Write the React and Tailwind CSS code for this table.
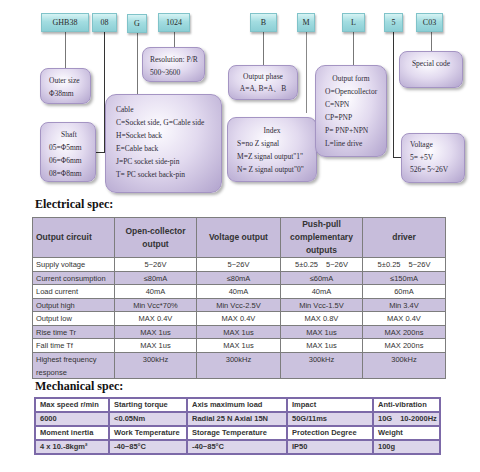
import React from "react";

const teal = [
  ["GHB38", "left-[41px] top-[13px] w-[48px] h-[19px]"],
  ["08", "left-[92px] top-[13px] w-[25px] h-[19px]"],
  ["G", "left-[127px] top-[14px] w-[20px] h-[19px]"],
  ["1024", "left-[158px] top-[13px] w-[32px] h-[19px]"],
  ["B", "left-[250px] top-[13px] w-[27px] h-[19px]"],
  ["M", "left-[297px] top-[13px] w-[18px] h-[19px]"],
  ["L", "left-[342px] top-[13px] w-[23px] h-[19px]"],
  ["5", "left-[384px] top-[13px] w-[19px] h-[19px]"],
  ["C03", "left-[416px] top-[13px] w-[27px] h-[19px]"],
];

const lines = [
  "left-[65px] top-[32px] w-px h-[36px] bg-[#777]",
  "left-[104px] top-[32px] w-px h-[121px] bg-[#333]",
  "left-[96px] top-[152px] w-[9px] h-px bg-[#333]",
  "left-[137px] top-[33px] w-px h-[61px] bg-[#777]",
  "left-[174px] top-[32px] w-px h-[15px] bg-[#777]",
  "left-[263px] top-[32px] w-px h-[33px] bg-[#777]",
  "left-[306px] top-[32px] w-px h-[81px] bg-[#888]",
  "left-[353px] top-[32px] w-px h-[33px] bg-[#777]",
  "left-[393px] top-[32px] w-px h-[126px] bg-[#333]",
  "left-[393px] top-[157px] w-[8px] h-px bg-[#333]",
  "left-[431px] top-[32px] w-px h-[19px] bg-[#777]",
];

function PBox({ cls, children }) {
  return (
    <div
      className={`absolute rounded-[8px] border border-[#a494c3] bg-[radial-gradient(ellipse_at_45%_35%,#fdfcff_0%,#e2daef_45%,#b1a3cd_100%)] shadow-[2px_2px_3px_rgba(0,0,0,0.3)] text-[7.5px] text-[#2e2a36] ${cls}`}
    >
      {children}
    </div>
  );
}

const elecHead = [
  ["Output circuit", "justify-start pl-[3px]"],
  ["Open-collector\noutput", "justify-center text-center"],
  ["Voltage output", "justify-center text-center"],
  ["Push-pull\ncomplementary\noutputs", "justify-center text-center"],
  ["driver", "justify-center text-center"],
];

const elecRows = [
  ["Supply voltage", "5~26V", "5~26V", "5±0.25　5~26V", "5±0.25　5~26V"],
  ["Current consumption", "≤80mA", "≤80mA", "≤60mA", "≤150mA"],
  ["Load current", "40mA", "40mA", "40mA", "60mA"],
  ["Output high", "Min Vcc*70%", "Min Vcc-2.5V", "Min Vcc-1.5V", "Min 3.4V"],
  ["Output low", "MAX 0.4V", "MAX 0.4V", "MAX 0.8V", "MAX 0.4V"],
  ["Rise time Tr", "MAX 1us", "MAX 1us", "MAX 1us", "MAX 200ns"],
  ["Fall time Tf", "MAX 1us", "MAX 1us", "MAX 1us", "MAX 200ns"],
  ["Highest frequency\nresponse", "300kHz", "300kHz", "300kHz", "300kHz"],
];

const mechRows = [
  ["Max speed r/min", "Starting torque", "Axis maximum load", "Impact", "Anti-vibration"],
  ["6000", "<0.05Nm", "Radial 25 N Axial 15N", "50G/11ms", "10G　10-2000Hz"],
  ["Moment inertia", "Work Temperature", "Storage Temperature", "Protection Degree", "Weight"],
  ["4 x 10.-8kgm²", "-40~85°C", "-40~85°C", "IP50", "100g"],
];

export default function App() {
  return (
    <div className="w-[480px] h-[472px] bg-white overflow-hidden font-['Liberation_Sans',Arial,sans-serif]">
      {/* Ordering code diagram */}
      <div className="relative h-[196px] font-['Liberation_Serif','Times_New_Roman',serif]">
        {lines.map((c, i) => (
          <div key={i} className={`absolute ${c}`} />
        ))}
        {teal.map(([t, c]) => (
          <div
            key={t}
            className={`absolute flex items-center justify-center border border-[#80c3c9] bg-[linear-gradient(#d6f3f4,#a3dde1_45%,#8ccfd5)] shadow-[1px_2px_2px_rgba(0,0,0,0.3)] text-[8px] text-[#2a2a2a] ${c}`}
          >
            {t}
          </div>
        ))}

        <PBox cls="left-[142px] top-[47px] w-[63px] h-[35px] pt-[5px] pl-[7px] leading-[13px]">
          <div>Resolution: P/R</div>
          <div>500~3600</div>
        </PBox>

        <PBox cls="left-[40px] top-[68px] w-[51px] h-[36px] pt-[5px] pl-[8px] leading-[13px]">
          <div>Outer size</div>
          <div>Φ38mm</div>
        </PBox>

        <PBox cls="left-[105px] top-[94px] w-[117px] h-[99px] rounded-[11px] pt-[8px] pl-[10px] leading-[13px]">
          <div>Cable</div>
          <div>C=Socket side, G=Cable side</div>
          <div>H=Socket back</div>
          <div>E=Cable back</div>
          <div>J=PC socket side-pin</div>
          <div>T= PC socket back-pin</div>
        </PBox>

        <PBox cls="left-[40px] top-[122px] w-[56px] h-[60px] pt-[5px] pl-[8px] leading-[13px]">
          <div className="pl-[12px]">Shaft</div>
          <div>05=Φ5mm</div>
          <div>06=Φ6mm</div>
          <div>08=Φ8mm</div>
        </PBox>

        <PBox cls="left-[228px] top-[65px] w-[70px] h-[35px] pt-[5px] text-center leading-[12px]">
          <div>Output phase</div>
          <div>A=A, B=A、B</div>
        </PBox>

        <PBox cls="left-[227px] top-[117px] w-[90px] h-[65px] rounded-[9px] pt-[6px] pl-[9px] leading-[13px]">
          <div className="text-center pr-[9px]">Index</div>
          <div>S=no Z signal</div>
          <div>M=Z signal output"1"</div>
          <div>N= Z signal output"0"</div>
        </PBox>

        <PBox cls="left-[315px] top-[65px] w-[72px] h-[92px] rounded-[10px] pt-[6px] pl-[9px] leading-[13px]">
          <div className="text-center pr-[9px]">Output form</div>
          <div>O=Opencollector</div>
          <div>C=NPN</div>
          <div>CP=PNP</div>
          <div>P= PNP+NPN</div>
          <div>L=line drive</div>
        </PBox>

        <PBox cls="left-[399px] top-[51px] w-[64px] h-[37px] pt-[5px] text-center leading-[13px]">
          <div>Special code</div>
        </PBox>

        <PBox cls="left-[401px] top-[133px] w-[64px] h-[50px] pt-[5px] pl-[8px] leading-[12.5px]">
          <div>Voltage</div>
          <div>5= +5V</div>
          <div>526= 5~26V</div>
        </PBox>
      </div>

      {/* Electrical spec */}
      <div className="h-[21px] pl-[35px] pt-[1px] font-['Liberation_Serif','Times_New_Roman',serif] font-bold text-[12px] leading-[14px] text-[#111]">
        Electrical spec:
      </div>
      <div className="ml-[32px] w-[414px] grid grid-cols-[81px_81px_83px_81px_82px] grid-rows-[39px_13px_12px_13px_12px_13px_12px_13px_25px] gap-px bg-[#7d7d7d] border border-[#7d7d7d] text-[#333]">
        {elecHead.map(([t, c], i) => (
          <div
            key={i}
            className={`flex items-center bg-[#c7bddb] font-bold text-[8.5px] leading-[13px] whitespace-pre-line ${c}`}
          >
            {t}
          </div>
        ))}
        {elecRows.map((row, r) =>
          row.map((t, i) => (
            <div
              key={r + "-" + i}
              className={`text-[7.5px] leading-[13px] whitespace-pre-line overflow-hidden ${
                r % 2 === 0 ? "bg-white" : "bg-[#cbc2de]"
              } ${i === 0 ? "pl-[3px]" : "text-center"} ${r === 7 ? "" : "flex items-center " + (i === 0 ? "justify-start" : "justify-center")}`}
            >
              {t}
            </div>
          ))
        )}
      </div>

      {/* Mechanical spec */}
      <div className="h-[18px] pl-[35px] font-['Liberation_Serif','Times_New_Roman',serif] font-bold text-[12px] leading-[14px] text-[#111]">
        Mechanical spec:
      </div>
      <div className="ml-[34px] w-[407px] grid grid-cols-[72px_76px_98px_84px_65px] grid-rows-[12px_12px_12px_12px] gap-[2px] bg-[#7c69a8] border-2 border-[#7c69a8] text-[#333] font-bold text-[7.5px] leading-[12px]">
        {mechRows.map((row, r) =>
          row.map((t, i) => (
            <div
              key={r + "-" + i}
              className={`px-[4px] whitespace-nowrap overflow-hidden ${
                r % 2 === 0 ? "bg-white" : "bg-[#dcd5ea]"
              }`}
            >
              {t}
            </div>
          ))
        )}
      </div>
    </div>
  );
}
